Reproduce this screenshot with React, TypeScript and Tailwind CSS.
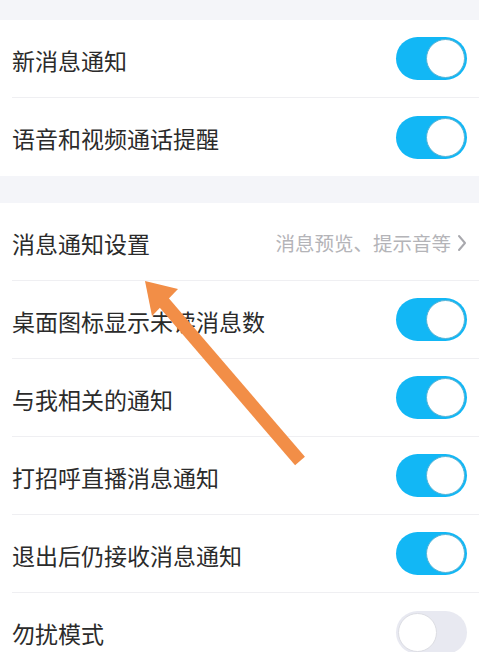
const Toggle = ({ on }: { on: boolean }) => (
  <div
    className={`flex h-[43px] w-[71px] shrink-0 items-center rounded-full px-[2px] ${
      on ? 'justify-end bg-[#12b7f5]' : 'justify-start bg-[#e8e9f1]'
    }`}
  >
    <div
      className={`h-[39px] w-[39px] rounded-full bg-white ${
        on ? 'border border-[#5ab4d6]' : 'border border-[#dcdde3]'
      }`}
    />
  </div>
);

interface RowProps {
  label: string;
  on?: boolean;
  detail?: string;
  last?: boolean;
}

const Row = ({ label, on, detail, last }: RowProps) => (
  <div className="flex h-[78px] pl-3">
    <div className={`flex flex-1 items-center justify-between pr-3 ${last ? '' : 'border-b border-[#efeff2]'}`}>
      <span className="pt-[3px] text-[23px] text-[#2b2b2b]">{label}</span>
      {detail ? (
        <span className="flex items-center gap-[6px] pt-[3px] text-[19.5px] text-[#b4b4b8]">
          {detail}
          <svg width="10" height="18" viewBox="0 0 10 18" fill="none">
            <path d="M2 2l6 7-6 7" stroke="#a8a8ad" strokeWidth="2" strokeLinecap="round" strokeLinejoin="round" />
          </svg>
        </span>
      ) : (
        <Toggle on={!!on} />
      )}
    </div>
  </div>
);

const App = () => {
  return (
    <div
      className="relative h-[652px] w-[479px] overflow-hidden bg-[#f4f5f9]"
      style={{ fontFamily: '"Noto Sans CJK SC", "Noto Sans", sans-serif' }}
    >
      <div className="h-5" />
      <div className="bg-white">
        <Row label="新消息通知" on />
        <Row label="语音和视频通话提醒" on last />
      </div>
      <div className="h-[27px]" />
      <div className="bg-white">
        <Row label="消息通知设置" detail="消息预览、提示音等" />
        <Row label="桌面图标显示未读消息数" on />
        <Row label="与我相关的通知" on />
        <Row label="打招呼直播消息通知" on />
        <Row label="退出后仍接收消息通知" on />
        <Row label="勿扰模式" on={false} last />
      </div>

      {/* annotation arrow */}
      <svg className="pointer-events-none absolute left-0 top-0" width="479" height="652" viewBox="0 0 479 652">
        <line x1="300" y1="461" x2="160" y2="298" stroke="#f28e47" strokeWidth="13" />
        <polygon points="145,281 178,289 152,316" fill="#f28e47" />
      </svg>
    </div>
  );
};

export default App;
